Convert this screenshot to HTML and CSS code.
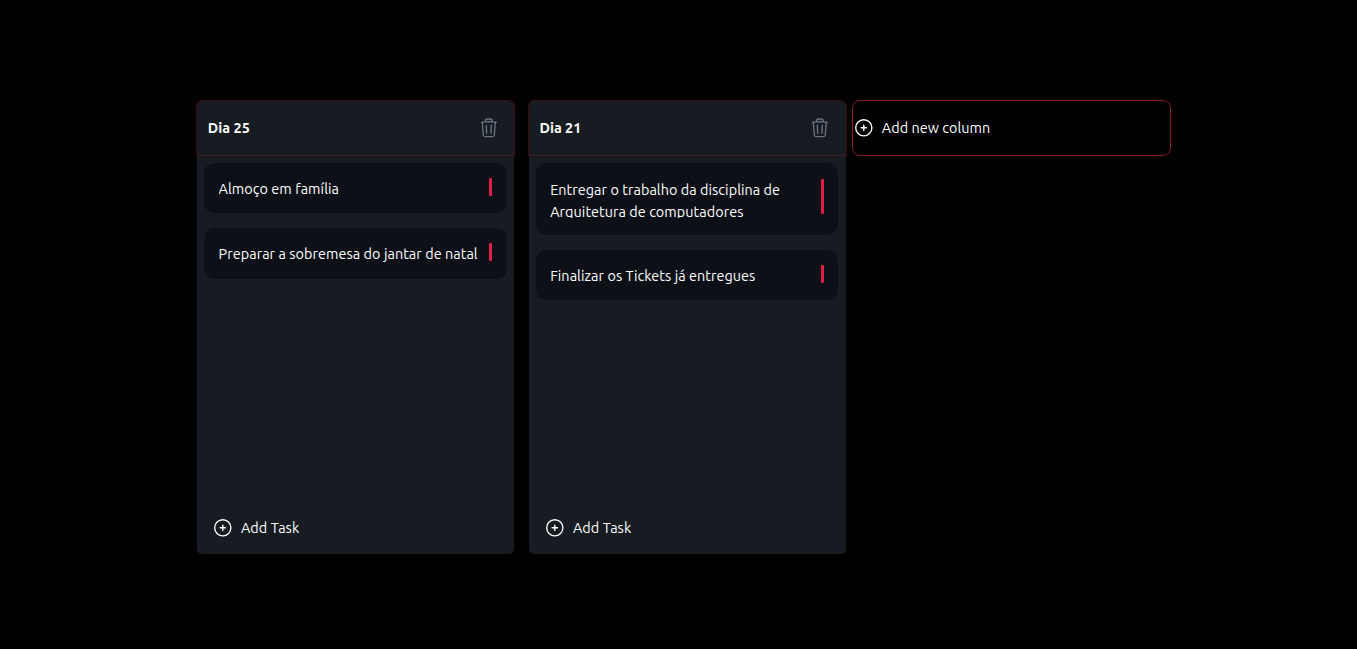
FILE: index.html
```html
<!DOCTYPE html>
<html lang="pt-BR">
<head>
<meta charset="utf-8">
<title>Kanban</title>
<link rel="stylesheet" href="styles.css">
</head>
<body>
<svg class="sprite" aria-hidden="true">
  <symbol id="trash" viewBox="0 0 24 24"><path d="m14.74 9-.346 9m-4.788 0L9.26 9m9.968-3.21c.342.052.682.107 1.022.166m-1.022-.165L18.16 19.673a2.25 2.25 0 0 1-2.244 2.077H8.084a2.25 2.25 0 0 1-2.244-2.077L4.772 5.79m14.456 0a48.108 48.108 0 0 0-3.478-.397m-12 .562c.34-.059.68-.114 1.022-.165m0 0a48.11 48.11 0 0 1 3.478-.397m7.5 0v-.916c0-1.18-.91-2.164-2.09-2.201a51.964 51.964 0 0 0-3.32 0c-1.18.037-2.09 1.022-2.09 2.201v.916m7.5 0a48.667 48.667 0 0 0-7.5 0"/></symbol>
  <symbol id="plus" viewBox="0 0 24 24"><path d="M12 9v6m3-3H9m12 0a9 9 0 1 1-18 0 9 9 0 0 1 18 0Z"/></symbol>
</svg>
<main class="board">
  <section class="column">
    <header class="column-header">
      <h2 class="title">Dia 25</h2>
      <svg class="icon icon-trash"><use href="#trash"/></svg>
    </header>
    <div class="tasks">
      <article class="task"><p class="text">Almoço em família</p><span class="bar"></span></article>
      <article class="task"><p class="text">Preparar a sobremesa do jantar de natal</p><span class="bar"></span></article>
    </div>
    <button class="add-task"><svg class="icon"><use href="#plus"/></svg><span>Add Task</span></button>
  </section>
  <section class="column">
    <header class="column-header">
      <h2 class="title">Dia 21</h2>
      <svg class="icon icon-trash"><use href="#trash"/></svg>
    </header>
    <div class="tasks">
      <article class="task task-tall"><p class="text">Entregar o trabalho da disciplina de<br>Arquitetura de computadores</p><span class="bar"></span></article>
      <article class="task"><p class="text">Finalizar os Tickets já entregues</p><span class="bar"></span></article>
    </div>
    <button class="add-task"><svg class="icon"><use href="#plus"/></svg><span>Add Task</span></button>
  </section>
  <button class="add-column"><svg class="icon"><use href="#plus"/></svg><span>Add new column</span></button>
</main>
</body>
</html>
```
FILE: styles.css
```css
* { box-sizing: border-box; }

body {
  margin: 0;
  background: #000;
  color: #fff;
  font: 14.4px/22px Ubuntu, "Noto Sans", sans-serif;
  letter-spacing: 0.055px;
  overflow: hidden;
}

.sprite { display: none; }

.board {
  display: flex;
  align-items: flex-start;
  padding: 100px 0 0 197px;
}

.column {
  display: flex;
  flex-direction: column;
  width: 317px;
  height: 453px;
  margin-top: 1px;
  margin-right: 15px;
  background: #171b22;
  border-radius: 5.4px;
}

.column + .column { margin-right: 6px; }

.column-header {
  display: flex;
  align-items: center;
  justify-content: space-between;
  height: 56px;
  margin: -1px -1px 0;
  padding: 0 14.2px 0 10.8px;
  border: 1px solid rgba(136, 19, 37, 0.45);
  border-radius: 5.4px 5.4px 0 0;
}

.column + .column .column-header {
  padding-right: 15px;
  padding-left: 10.4px;
}

.title {
  margin: 0;
  font-size: 14.4px;
  font-weight: 700;
  letter-spacing: 0;
}

.icon {
  flex: none;
  width: 21.6px;
  height: 21.6px;
  fill: none;
  stroke: currentColor;
  stroke-width: 1.5;
  stroke-linecap: round;
  stroke-linejoin: round;
}

.icon-trash { color: #6b7280; }

.tasks {
  display: flex;
  flex: 1;
  flex-direction: column;
  gap: 15px;
  padding: 7px 7px 0;
}

.column + .column .tasks { padding-right: 8px; }

.task {
  display: flex;
  align-items: flex-start;
  justify-content: space-between;
  height: 50px;
  padding: 15px 15px 14px 14.6px;
  background: #0d1117;
  border-radius: 10.8px;
}

.column + .column .task {
  padding-right: 14px;
  padding-left: 14.2px;
}

.task + .task { height: 51px; }
.task-tall + .task { height: 50px; }

.task-tall { height: 72px; padding-top: 16px; }

.text {
  height: 24px;
  margin: 0;
  overflow: hidden;
  white-space: nowrap;
}

.task-tall .text { height: 39px; }

.bar {
  flex: none;
  width: 3px;
  height: 18px;
  background: #e11d48;
  border-radius: 1px;
}

.task-tall .bar { height: 35px; }

.add-task,
.add-column {
  display: flex;
  align-items: center;
  padding: 0;
  background: none;
  border: 0;
  color: #fff;
  font: inherit;
  letter-spacing: inherit;
}

.add-task {
  gap: 7.2px;
  height: 52px;
  padding-left: 15.2px;
}

.add-column {
  gap: 7.2px;
  width: 319px;
  height: 56px;
  border: 1px solid #881b2d;
  border-radius: 8px;
}
```
